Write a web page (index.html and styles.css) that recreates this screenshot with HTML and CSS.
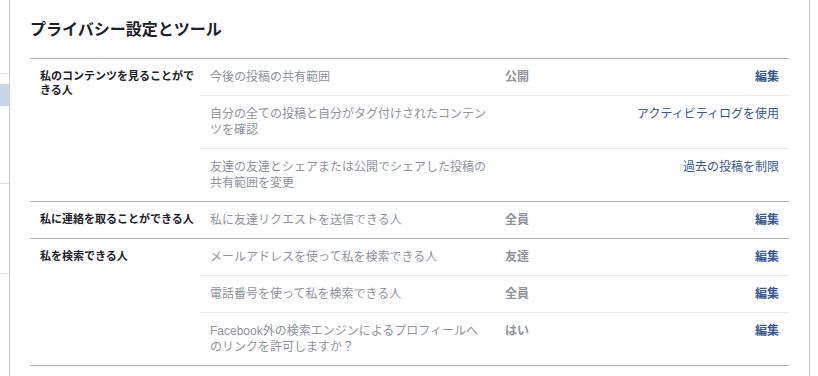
FILE: index.html
```html
<!DOCTYPE html>
<html lang="ja">
<head>
    <meta charset="UTF-8">
    <meta name="viewport" content="width=device-width, initial-scale=1.0">
    <title>プライバシー設定とツール</title>
    <link rel="stylesheet" href="styles.css">
</head>
<body>
    <div class="page">
        <!-- edge of the left navigation column -->
        <div class="side">
            <div class="side-top"></div>
            <div class="side-active"></div>
            <div class="side-block"></div>
            <div class="side-block-2"></div>
        </div>

        <div class="panel">
            <h2 class="title">プライバシー設定とツール</h2>

            <div class="settings">
                <div class="section">
                    <div class="section-label">私のコンテンツを見ることができる人</div>
                    <div class="items">
                        <div class="item">
                            <div class="item-name">今後の投稿の共有範囲</div>
                            <div class="item-value">公開</div>
                            <div class="item-action"><a href="#" class="edit">編集</a></div>
                        </div>
                        <div class="item">
                            <div class="item-name">自分の全ての投稿と自分がタグ付けされたコンテンツを確認</div>
                            <div class="item-value"></div>
                            <div class="item-action"><a href="#">アクティビティログを使用</a></div>
                        </div>
                        <div class="item">
                            <div class="item-name">友達の友達とシェアまたは公開でシェアした投稿の共有範囲を変更</div>
                            <div class="item-value"></div>
                            <div class="item-action"><a href="#">過去の投稿を制限</a></div>
                        </div>
                    </div>
                </div>

                <div class="section">
                    <div class="section-label">私に連絡を取ることができる人</div>
                    <div class="items">
                        <div class="item">
                            <div class="item-name">私に友達リクエストを送信できる人</div>
                            <div class="item-value">全員</div>
                            <div class="item-action"><a href="#" class="edit">編集</a></div>
                        </div>
                    </div>
                </div>

                <div class="section">
                    <div class="section-label">私を検索できる人</div>
                    <div class="items">
                        <div class="item">
                            <div class="item-name">メールアドレスを使って私を検索できる人</div>
                            <div class="item-value">友達</div>
                            <div class="item-action"><a href="#" class="edit">編集</a></div>
                        </div>
                        <div class="item">
                            <div class="item-name">電話番号を使って私を検索できる人</div>
                            <div class="item-value">全員</div>
                            <div class="item-action"><a href="#" class="edit">編集</a></div>
                        </div>
                        <div class="item">
                            <div class="item-name">Facebook外の検索エンジンによるプロフィールへのリンクを許可しますか？</div>
                            <div class="item-value">はい</div>
                            <div class="item-action"><a href="#" class="edit">編集</a></div>
                        </div>
                    </div>
                </div>
            </div>
        </div>
    </div>
</body>
</html>
```

FILE: styles.css
```css
body {
    margin: 0;
    background-color: #fff;
    font-family: "Liberation Sans", "Noto Sans CJK JP", sans-serif;
    color: #1d2129;
}
.page {
    display: flex;
    min-height: 100vh;
}
.side {
    flex: 0 0 9px;
    border-right: 1px solid #ccc;
}
.side-top {
    height: 73px;
    border-bottom: 1px solid #dddfe2;
}
.side-active {
    margin-top: 10px;
    height: 22px;
    background-color: #c7d4e9;
}
.side-block {
    height: 77px;
    border-bottom: 1px solid #dddfe2;
}
.side-block-2 {
    height: 89px;
    border-bottom: 1px solid #dddfe2;
}
.panel {
    flex: 0 0 759px;
    padding: 0 20px;
    border-right: 1px solid #ccc;
}
.title {
    margin: 0;
    padding: 20px 0 18px;
    font-size: 16px;
    line-height: 20px;
    font-weight: bold;
    color: #1d2129;
}
.settings {
    border-top: 1px solid #b4b5b8;
}
.section {
    display: flex;
    border-bottom: 1px solid #b4b5b8;
}
.section-label {
    flex: 0 0 170px;
    box-sizing: border-box;
    padding: 10px 4px 10px 10px;
    font-size: 11px;
    line-height: 14px;
    font-weight: bold;
    color: #1d2129;
}
.items {
    flex: 1;
}
.item {
    display: flex;
    padding: 10px 0;
    border-top: 1px solid #e9ebee;
    font-size: 12px;
    line-height: 16px;
}
.item:first-child {
    border-top: none;
}
.item-name {
    flex: 0 0 295px;
    box-sizing: border-box;
    padding: 0 8px 0 10px;
    color: #90949c;
}
.item-value {
    flex: 0 0 100px;
    box-sizing: border-box;
    padding-left: 10px;
    font-weight: bold;
    color: #90949c;
}
.item-action {
    flex: 1;
    padding-right: 10px;
    text-align: right;
}
.item-action a {
    color: #365899;
    text-decoration: none;
}
.item-action a.edit {
    font-weight: bold;
}
```
